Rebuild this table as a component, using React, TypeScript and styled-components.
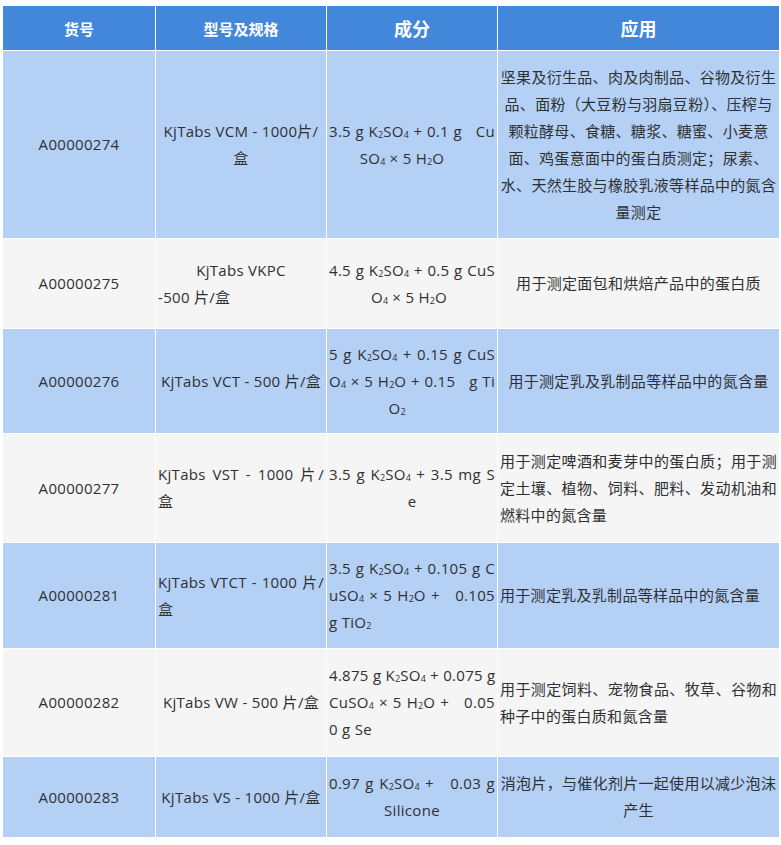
import React from "react";
import styled, { createGlobalStyle } from "styled-components";

const Global = createGlobalStyle`
  html, body { margin: 0; padding: 0; background: #ffffff; }
  body { font-family: "Open Sans", "Noto Sans CJK SC", sans-serif; }
`;

const Page = styled.div`
  padding: 6px 2px 0 3px;
`;

const Table = styled.div`
  display: grid;
  grid-template-columns: 152px 170px 170px 281px;
  gap: 1px;
  background: #ffffff;
  width: 776px;
`;

const HeadCell = styled.div<{ $big?: boolean }>`
  height: 44px;
  background: #4287d9;
  color: #ffffff;
  font-family: "Noto Sans CJK SC", sans-serif;
  font-weight: 700;
  font-size: ${(p) => (p.$big ? "18px" : "15px")};
  display: flex;
  align-items: center;
  justify-content: center;
`;

const Cell = styled.div<{ $tone: "blue" | "grey"; $h: number }>`
  height: ${(p) => p.$h}px;
  background: ${(p) => (p.$tone === "blue" ? "#b4d1f5" : "#f5f5f5")};
  color: #2f3033;
  font-size: 15px;
  line-height: 27px;
  display: flex;
  flex-direction: column;
  justify-content: center;
  padding: 0 2px;
  box-sizing: border-box;
  overflow: visible;
`;

type Align = "c" | "l" | "j";

const Line = styled.div<{ $align: Align; $shift?: number }>`
  white-space: nowrap;
  letter-spacing: 0.3px;
  padding-right: ${(p) => p.$shift ?? 0}px;
  text-align: ${(p) => (p.$align === "c" ? "center" : p.$align === "l" ? "left" : "justify")};
  text-align-last: ${(p) => (p.$align === "c" ? "center" : p.$align === "l" ? "left" : "justify")};
`;

const Sub = styled.span`
  font-size: 9px;
  vertical-align: -1px;
  line-height: 0;
  letter-spacing: 0;
`;

function renderText(t: string) {
  const parts = t.split(/\{(\d)\}/);
  return parts.map((p, i) => (i % 2 === 1 ? <Sub key={i}>{p}</Sub> : <React.Fragment key={i}>{p}</React.Fragment>));
}

const NB = "\u00a0\u00a0\u00a0";

type L = [string, Align, number?];
interface Row {
  h: number;
  tone: "blue" | "grey";
  id: string;
  spec: L[];
  comp: L[];
  app: L[];
}

const rows: Row[] = [
  {
    h: 187,
    tone: "blue",
    id: "A00000274",
    spec: [["KjTabs VCM - 1000片/", "c"], ["盒", "c"]],
    comp: [[`3.5 g K{2}SO{4} + 0.1 g${NB}Cu`, "j"], ["SO{4} × 5 H{2}O", "c", 20]],
    app: [
      ["坚果及衍生品、肉及肉制品、谷物及衍生", "c"],
      ["品、面粉（大豆粉与羽扇豆粉）、压榨与", "c"],
      ["颗粒酵母、食糖、糖浆、糖蜜、小麦意", "c"],
      ["面、鸡蛋意面中的蛋白质测定；尿素、", "c"],
      ["水、天然生胶与橡胶乳液等样品中的氮含", "c"],
      ["量测定", "c"],
    ],
  },
  {
    h: 89,
    tone: "grey",
    id: "A00000275",
    spec: [["KjTabs VKPC", "c"], ["-500 片/盒", "l"]],
    comp: [["4.5 g K{2}SO{4} + 0.5 g CuS", "j"], ["O{4} × 5 H{2}O", "c", 6]],
    app: [["用于测定面包和烘焙产品中的蛋白质", "c"]],
  },
  {
    h: 104,
    tone: "blue",
    id: "A00000276",
    spec: [["KjTabs VCT - 500 片/盒", "c"]],
    comp: [["5 g K{2}SO{4} + 0.15 g CuS", "j"], [`O{4} × 5 H{2}O + 0.15${NB}g Ti`, "j"], ["O{2}", "c", 30]],
    app: [["用于测定乳及乳制品等样品中的氮含量", "c"]],
  },
  {
    h: 108,
    tone: "grey",
    id: "A00000277",
    spec: [["KjTabs  VST  -  1000 片/", "j"], ["盒", "l"]],
    comp: [["3.5 g K{2}SO{4} + 3.5 mg S", "j"], ["e", "c"]],
    app: [
      ["用于测定啤酒和麦芽中的蛋白质；用于测", "j"],
      ["定土壤、植物、饲料、肥料、发动机油和", "j"],
      ["燃料中的氮含量", "l"],
    ],
  },
  {
    h: 105,
    tone: "blue",
    id: "A00000281",
    spec: [["KjTabs  VTCT  -  1000 片/", "j"], ["盒", "l"]],
    comp: [["3.5 g K{2}SO{4} + 0.105 g C", "j"], [`uSO{4} × 5 H{2}O +${NB}0.105`, "j"], ["g TiO{2}", "l"]],
    app: [["用于测定乳及乳制品等样品中的氮含量", "l"]],
  },
  {
    h: 107,
    tone: "grey",
    id: "A00000282",
    spec: [["KjTabs VW - 500 片/盒", "c"]],
    comp: [["4.875 g K{2}SO{4} + 0.075 g", "j"], [`CuSO{4} × 5 H{2}O +${NB}0.05`, "j"], ["0 g Se", "l"]],
    app: [["用于测定饲料、宠物食品、牧草、谷物和", "j"], ["种子中的蛋白质和氮含量", "l"]],
  },
  {
    h: 80,
    tone: "blue",
    id: "A00000283",
    spec: [["KjTabs VS - 1000 片/盒", "c"]],
    comp: [[`0.97 g K{2}SO{4} +${NB}0.03 g`, "j"], ["Silicone", "c"]],
    app: [["消泡片，与催化剂片一起使用以减少泡沫", "c"], ["产生", "c"]],
  },
];

const Lines: React.FC<{ lines: L[] }> = ({ lines }) => (
  <>
    {lines.map(([t, a, s], i) => (
      <Line key={i} $align={a} $shift={s}>
        {renderText(t)}
      </Line>
    ))}
  </>
);

export default function App() {
  return (
    <Page>
      <Global />
      <Table>
        <HeadCell>货号</HeadCell>
        <HeadCell>型号及规格</HeadCell>
        <HeadCell $big>成分</HeadCell>
        <HeadCell $big>应用</HeadCell>
        {rows.map((r) => (
          <React.Fragment key={r.id}>
            <Cell $tone={r.tone} $h={r.h}>
              <Line $align="c">{r.id}</Line>
            </Cell>
            <Cell $tone={r.tone} $h={r.h}>
              <Lines lines={r.spec} />
            </Cell>
            <Cell $tone={r.tone} $h={r.h}>
              <Lines lines={r.comp} />
            </Cell>
            <Cell $tone={r.tone} $h={r.h}>
              <Lines lines={r.app} />
            </Cell>
          </React.Fragment>
        ))}
      </Table>
    </Page>
  );
}
